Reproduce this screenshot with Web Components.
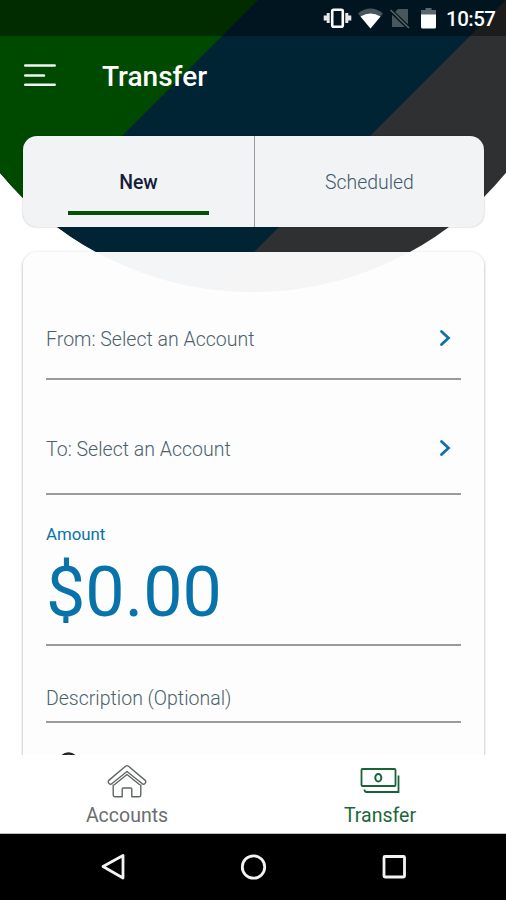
<!DOCTYPE html>
<html lang="en"><head><meta charset="utf-8"><title>Transfer</title>
<style>html,body{margin:0;padding:0}body{width:506px;height:900px;overflow:hidden;background:#fff;font-family:Roboto,"Liberation Sans",sans-serif}</style></head>
<body><transfer-screen></transfer-screen>
<script>
const define = (name, html) => customElements.define(name, class extends HTMLElement {
  constructor() {
    super();
    const t = document.createElement('template');
    t.innerHTML = html;
    this.attachShadow({ mode: 'open' }).append(t.content.cloneNode(true));
  }
});

define('status-bar', `<style>
:host{display:flex;height:36px;background:rgba(0,0,0,.4);color:#fff;justify-content:flex-end;align-items:center;box-sizing:border-box;padding:2px 10px 0 0}
svg{display:block}span{font-size:20.5px;line-height:24px;font-weight:500;width:50px;white-space:nowrap;letter-spacing:-.5px;margin-left:9px}
</style>
<svg width="114" height="24" viewBox="0 0 114 24">
<rect x="9.2" y="2.7" width="10.6" height="17" rx="1.5" fill="none" stroke="#fff" stroke-width="2.6"/>
<path d="M2.200 8.500v5M5.200 6v10M23.800 6v10M26.800 8.500v5" stroke="#e8e8e8" stroke-width="3"/>
<path d="M35 6.500Q47.500-3.500 60 6.500L47.500 21.500z" fill="#48575c"/><path d="M37.500 9.500Q47.500 3.500 57.500 9.500L47.500 21.500z" fill="#fff"/>
<path d="M69 8L75 2h10v18H69z" fill="#48575c"/><path d="M67 3L86 21" stroke="#02151c" stroke-width="4"/><path d="M67.500 3L86 21" stroke="#56656a" stroke-width="1.600"/>
<path d="M102.500 3V1h6v2h4.500v6H98V3z" fill="#59686d"/><path d="M98 7.500h15V20q0 1.500-1.500 1.500h-12Q98 21.500 98 20z" fill="#fff"/>
</svg><span>10:57</span>`);

define('title-bar', `<style>
:host{display:flex;height:100px;box-sizing:border-box;padding:26px 0 0 24px;align-items:flex-start;gap:45px;color:#fff}
svg{display:block;margin-top:1px}h1{margin:0;font-size:28px;line-height:30px;font-weight:500}
</style>
<svg width="33" height="26" viewBox="0 0 33 26"><path d="M1.200 2.500h29.500M1.200 12.500H20M1.200 21.700h29.500" fill="none" stroke="#f2f6f2" stroke-width="2.500" stroke-linecap="round"/></svg>
<h1><slot></slot></h1>`);

define('header-backdrop', `<style>:host{display:block;position:absolute;left:0;top:0}svg{display:block}</style>
<svg width="506" height="300" viewBox="0 0 506 300"><defs><clipPath id="c"><circle cx="253" cy="-36" r="328"/></clipPath></defs>
<g clip-path="url(#c)"><path d="M0 0h506v300H0z" fill="#2f3031"/><path d="M0 0H506L206 300H0z" fill="#002434"/><path d="M0 0H258L-42 300z" fill="#004a00"/></g></svg>`);

define('tab-item', `<style>
:host{display:flex;flex:1;flex-direction:column;align-items:center;box-sizing:border-box;padding-top:35px;font-size:19.400px;line-height:24px;color:#3f5a6a;font-weight:300}
:host([active]){flex:0 0 232px;color:#14203a;font-weight:500;border-right:1px solid #989da3}
i{display:none;width:141px;height:4px;margin-top:16px;background:#045004}:host([active]) i{display:block}
</style><slot></slot><i></i>`);

define('tab-group', `<style>
:host{display:flex;height:91px;margin:0 22px 0 23px;border-radius:14px;background:#f1f3f5;box-shadow:0 0 2px rgba(0,0,0,.3)}
</style><slot></slot>`);

define('select-row', `<style>
:host{display:flex;justify-content:space-between;box-sizing:border-box;border-bottom:2px solid #999c9e;color:#4b616c;font-size:19.550px;font-weight:300;line-height:24px;height:var(--h);padding-top:var(--p)}
svg{display:block;margin:1px 9px 0 0}
</style><span><slot></slot></span>
<svg width="13" height="18" viewBox="0 0 13 18"><path d="M2.500 2.500L9.500 9L2.500 15.500" fill="none" stroke="#1270a5" stroke-width="2.800" stroke-linecap="round"/></svg>`);

define('amount-field', `<style>
:host{display:block;box-sizing:border-box;height:151px;padding-top:28px;border-bottom:2px solid #999c9e;color:#0873aa}
label{display:block;font-size:16.800px;line-height:22px}output{display:block;font-size:70px;line-height:82px;margin-top:6px}
</style><label>Amount</label><output><slot></slot></output>`);

define('text-row', `<style>
:host{display:block;box-sizing:border-box;height:77px;padding-top:41px;border-bottom:2px solid #999c9e;color:#4b616c;font-size:19.500px;font-weight:300;line-height:24px}
</style><slot></slot>`);

define('form-card', `<style>
:host{display:block;box-sizing:border-box;height:503px;margin:25px 22px 0 23px;padding:0 23px;overflow:hidden;border-radius:14px 14px 0 0;background:rgba(253,253,253,.965);box-shadow:0 1px 3px rgba(0,0,0,.38);clip-path:inset(-3px -5px 0 -5px)}
svg{display:block;margin:29px 0 0 13px}
</style><slot></slot>
<svg width="20" height="20" viewBox="0 0 20 20"><circle cx="9.500" cy="10.500" r="9" fill="none" stroke="#222" stroke-width="2.500"/></svg>`);

define('nav-item', `<style>
:host{display:flex;flex:1;flex-direction:column;align-items:center;font-size:19.500px;line-height:26px;color:#6b6e6f;padding-left:1px}
:host([active]){color:#1c683a}
</style><slot name="icon"></slot><span><slot></slot></span>`);

define('bottom-nav', `<style>
:host{display:flex;height:79px;box-sizing:border-box;padding-top:8px;background:#fff;border-bottom:1px solid #bbb}
svg{display:block;height:40px}
</style>
<nav-item><svg slot="icon" width="42" height="40" viewBox="0 0 42 40" fill="none" stroke="#626566" stroke-width="1.400" stroke-linejoin="round">
<path d="M19.500 3.200Q21 2 22.500 3.200L39.500 17.600Q40.500 19 39 20.500Q37.500 22 36 20.500L21 8.500L6 20.500Q4.500 22 3 20.500Q1.500 19 2.500 17.600z"/>
<path d="M7.200 21.500V32q0 1.700 1.700 1.700h7.300V26q0-1 1-1h7.600q1 0 1 1v7.700h7.300q1.700 0 1.700-1.700V21.500M8 22L21 11.500L34 22"/></svg>Accounts</nav-item>
<nav-item active><svg slot="icon" width="42" height="40" viewBox="0 0 42 40" fill="none" stroke="#186337" stroke-width="1.800">
<rect x="2.500" y="6" width="34" height="17" rx="1"/><ellipse cx="19.300" cy="14.700" rx="3" ry="3.800" stroke-width="2"/><path d="M39.500 12.500V29H7.500q-2 0-2-2.500" /></svg>Transfer</nav-item>`);

define('system-nav', `<style>
:host{display:flex;height:66px;background:#000;align-items:center;justify-content:center}svg{display:block}
</style><svg width="506" height="66" viewBox="0 1 506 66" fill="none" stroke="#f4f4f4" stroke-width="2.800" stroke-linejoin="round">
<path d="M123 22.500V45L103 33.500z"/><circle cx="253.500" cy="34" r="11.200"/><rect x="384" y="23.500" width="20.500" height="20.500" rx="1"/></svg>`);

define('transfer-screen', `<style>
:host{display:block;position:relative;width:506px;height:900px;overflow:hidden}
main{position:relative}
</style><header-backdrop></header-backdrop><main>
<status-bar></status-bar><title-bar>Transfer</title-bar>
<tab-group><tab-item active>New</tab-item><tab-item>Scheduled</tab-item></tab-group>
<form-card>
<select-row style="--h:128px;--p:76px">From: Select an Account</select-row>
<select-row style="--h:115px;--p:58px">To: Select an Account</select-row>
<amount-field>$0.00</amount-field>
<text-row>Description (Optional)</text-row>
</form-card>
<bottom-nav></bottom-nav><system-nav></system-nav></main>`);
</script></body></html>
